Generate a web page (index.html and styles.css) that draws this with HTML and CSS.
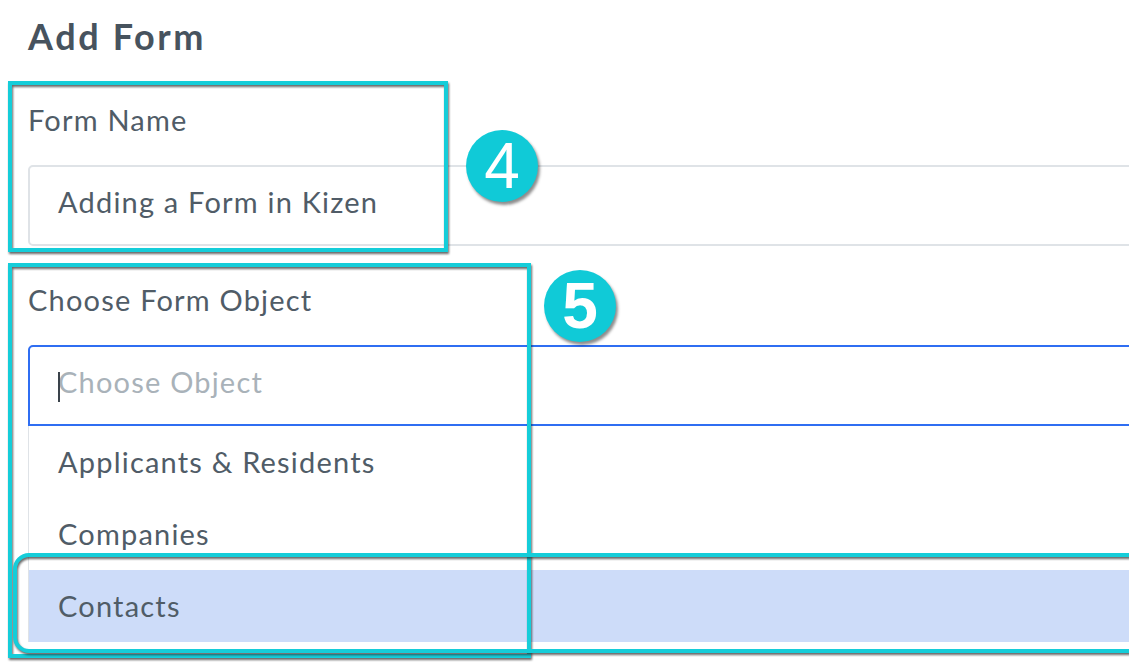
FILE: index.html
```html
<!DOCTYPE html>
<html lang="en">
<head>
    <meta charset="UTF-8">
    <meta name="viewport" content="width=device-width, initial-scale=1.0">
    <title>Add Form</title>
    <link rel="stylesheet" href="styles.css">
</head>
<body>
    <div class="page">
        <h1 class="page__title">Add Form</h1>

        <div class="field">
            <label class="field__label">Form Name</label>
            <div class="text-input">Adding a Form in Kizen</div>
        </div>

        <div class="field field--object">
            <label class="field__label">Choose Form Object</label>
            <div class="select">
                <div class="select__control">
                    <span class="select__caret"></span>
                    <span class="select__placeholder">Choose Object</span>
                </div>
                <ul class="select__menu">
                    <li class="select__option">Applicants &amp; Residents</li>
                    <li class="select__option">Companies</li>
                    <li class="select__option is-active">Contacts</li>
                </ul>
            </div>
        </div>

        <!-- tutorial annotations drawn over the form -->
        <div class="callout callout--name"></div>
        <div class="callout callout--object"></div>
        <div class="callout callout--option"></div>
        <div class="step step--4">4</div>
        <div class="step step--5">5</div>
    </div>
</body>
</html>
```

FILE: styles.css
```css
:root {
   --text: #505c67;
   --muted: #a9b2b9;
   --line: #dfe3e7;
   --focus: #2f6ef2;
   --active: #cddcf9;
   --teal: #15cdd9;
}

* {
   padding: 0;
   margin: 0;
   box-sizing: border-box;
}

body {
   font-family: "Lato", "Open Sans", sans-serif;
   color: var(--text);
   background-color: #ffffff;
   overflow: hidden;
}

.page {
   position: relative;
   width: 1200px;
   height: 662px;
   padding: 16px 0 0 28px;
}

.page__title {
   font-size: 36px;
   line-height: 40px;
   font-weight: 700;
   letter-spacing: 2.6px;
   color: #47535e;
}

.field {
   margin-top: 46px;
   letter-spacing: 1.2px;
}

.field--object {
   margin-top: 36px;
}

.field__label {
   display: block;
   font-size: 29px;
   line-height: 36px;
   margin-bottom: 27px;
}

.text-input {
   height: 81px;
   padding: 17px 28px 0;
   font-size: 29px;
   line-height: 36px;
   border: 2px solid var(--line);
   border-radius: 5px;
}

.select__control {
   position: relative;
   height: 81px;
   padding: 17px 28px 0;
   font-size: 29px;
   line-height: 36px;
   border: 2px solid var(--focus);
   border-radius: 5px 5px 0 0;
}

.select__placeholder {
   color: var(--muted);
}

.select__caret {
   position: absolute;
   left: 28px;
   top: 25px;
   width: 2px;
   height: 30px;
   background-color: #3a434b;
}

.select__menu {
   list-style: none;
   border-left: 1px solid var(--line);
}

.select__option {
   height: 72px;
   padding-left: 29px;
   font-size: 29px;
   line-height: 72px;
}

.select__option.is-active {
   background-color: var(--active);
}

/* annotations */
.callout {
   position: absolute;
   border: 4px solid var(--teal);
   filter: drop-shadow(1px 2px 1px rgba(40, 40, 40, 0.7));
}

.callout--name {
   left: 8px;
   top: 81px;
   width: 440px;
   height: 171px;
}

.callout--object {
   left: 8px;
   top: 263px;
   width: 523px;
   height: 395px;
}

.callout--option {
   left: 13px;
   top: 553px;
   width: 1160px;
   height: 100px;
   border-radius: 16px;
}

.step {
   position: absolute;
   width: 72px;
   height: 72px;
   border-radius: 50%;
   background-color: #10cad7;
   color: #ffffff;
   font-family: "Liberation Sans", sans-serif;
   font-size: 64px;
   line-height: 72px;
   text-align: center;
   box-shadow: 2px 3px 3px rgba(0, 0, 0, 0.45);
}

.step--4 {
   left: 466px;
   top: 130px;
}

.step--5 {
   left: 544px;
   top: 270px;
   font-weight: 700;
}
```
